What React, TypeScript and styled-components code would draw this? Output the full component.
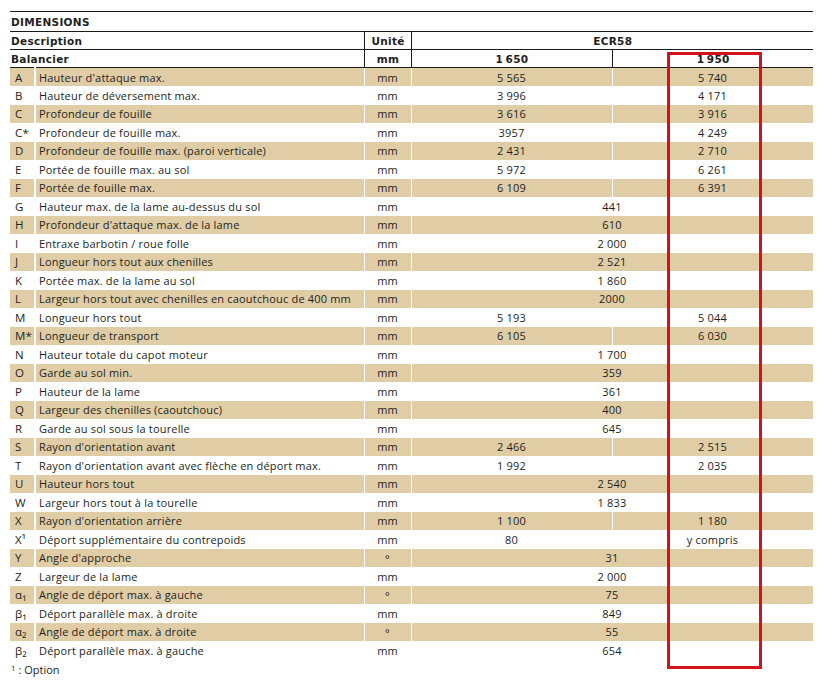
import styled, { createGlobalStyle } from "styled-components";

const GlobalStyle = createGlobalStyle`
  html, body {
    margin: 0;
    padding: 0;
    background: #ffffff;
  }
  body {
    font-family: "Open Sans", "Noto Sans", sans-serif;
    color: #231f20;
  }
`;

type Row = {
  key: string;
  label: string;
  unit: string;
  a: string;
  b?: string;
};

const rows: Row[] = [
  { key: "A", label: "Hauteur d'attaque max.", unit: "mm", a: "5 565", b: "5 740" },
  { key: "B", label: "Hauteur de déversement max.", unit: "mm", a: "3 996", b: "4 171" },
  { key: "C", label: "Profondeur de fouille", unit: "mm", a: "3 616", b: "3 916" },
  { key: "C*", label: "Profondeur de fouille max.", unit: "mm", a: "3957", b: "4 249" },
  { key: "D", label: "Profondeur de fouille max. (paroi verticale)", unit: "mm", a: "2 431", b: "2 710" },
  { key: "E", label: "Portée de fouille max. au sol", unit: "mm", a: "5 972", b: "6 261" },
  { key: "F", label: "Portée de fouille max.", unit: "mm", a: "6 109", b: "6 391" },
  { key: "G", label: "Hauteur max. de la lame au-dessus du sol", unit: "mm", a: "441" },
  { key: "H", label: "Profondeur d'attaque max. de la lame", unit: "mm", a: "610" },
  { key: "I", label: "Entraxe barbotin / roue folle", unit: "mm", a: "2 000" },
  { key: "J", label: "Longueur hors tout aux chenilles", unit: "mm", a: "2 521" },
  { key: "K", label: "Portée max. de la lame au sol", unit: "mm", a: "1 860" },
  { key: "L", label: "Largeur hors tout avec chenilles en caoutchouc de 400 mm", unit: "mm", a: "2000" },
  { key: "M", label: "Longueur hors tout", unit: "mm", a: "5 193", b: "5 044" },
  { key: "M*", label: "Longueur de transport", unit: "mm", a: "6 105", b: "6 030" },
  { key: "N", label: "Hauteur totale du capot moteur", unit: "mm", a: "1 700" },
  { key: "O", label: "Garde au sol min.", unit: "mm", a: "359" },
  { key: "P", label: "Hauteur de la lame", unit: "mm", a: "361" },
  { key: "Q", label: "Largeur des chenilles (caoutchouc)", unit: "mm", a: "400" },
  { key: "R", label: "Garde au sol sous la tourelle", unit: "mm", a: "645" },
  { key: "S", label: "Rayon d'orientation avant", unit: "mm", a: "2 466", b: "2 515" },
  { key: "T", label: "Rayon d'orientation avant avec flèche en déport max.", unit: "mm", a: "1 992", b: "2 035" },
  { key: "U", label: "Hauteur hors tout", unit: "mm", a: "2 540" },
  { key: "W", label: "Largeur hors tout à la tourelle", unit: "mm", a: "1 833" },
  { key: "X", label: "Rayon d'orientation arrière", unit: "mm", a: "1 100", b: "1 180" },
  { key: "X¹", label: "Déport supplémentaire du contrepoids", unit: "mm", a: "80", b: "y compris" },
  { key: "Y", label: "Angle d'approche", unit: "°", a: "31" },
  { key: "Z", label: "Largeur de la lame", unit: "mm", a: "2 000" },
  { key: "α₁", label: "Angle de déport max. à gauche", unit: "°", a: "75" },
  { key: "β₁", label: "Déport parallèle max. à droite", unit: "mm", a: "849" },
  { key: "α₂", label: "Angle de déport max. à droite", unit: "°", a: "55" },
  { key: "β₂", label: "Déport parallèle max. à gauche", unit: "mm", a: "654" },
];

const App = () => (
  <>
    <GlobalStyle />
    <Page>
      <Sheet>
        <Table>
          <colgroup>
            <col style={{ width: 25 }} />
            <col style={{ width: 329 }} />
            <col style={{ width: 47 }} />
            <col style={{ width: 201 }} />
            <col style={{ width: 201 }} />
          </colgroup>
          <thead>
            <TitleRow>
              <TitleCell colSpan={5}>DIMENSIONS</TitleCell>
            </TitleRow>
            <HeadRow>
              <HeadCell colSpan={2}>Description</HeadCell>
              <HeadCell $center $divided>Unité</HeadCell>
              <HeadCell $center $divided colSpan={2}>ECR58</HeadCell>
            </HeadRow>
            <HeadRow>
              <HeadCell colSpan={2}>Balancier</HeadCell>
              <HeadCell $center $divided>mm</HeadCell>
              <HeadCell $center $divided>1{"\u2009"}650</HeadCell>
              <HeadCell $center $divided>1{"\u2009"}950</HeadCell>
            </HeadRow>
          </thead>
          <tbody>
            {rows.map((r, i) => (
              <DataRow key={r.key} $shaded={i % 2 === 0}>
                <LetterCell>{r.key}</LetterCell>
                <DescCell>{r.label}</DescCell>
                <UnitCell $degree={r.unit === "°"}>{r.unit}</UnitCell>
                {r.b === undefined ? (
                  <ValueCell colSpan={2}>{r.a}</ValueCell>
                ) : (
                  <>
                    <ValueCell>{r.a}</ValueCell>
                    <ValueCell>{r.b}</ValueCell>
                  </>
                )}
              </DataRow>
            ))}
          </tbody>
        </Table>
        <Highlight />
        <Footnote>
          <sup>1</sup> : Option
        </Footnote>
      </Sheet>
    </Page>
  </>
);
export default App;

const Page = styled.div`
  padding: 11px 0 0 10px;
`;

const Sheet = styled.div`
  position: relative;
  width: 803px;
`;

const Table = styled.table`
  width: 803px;
  table-layout: fixed;
  border-collapse: collapse;
  font-size: 11px;
  letter-spacing: 0.18px;
`;

const TitleRow = styled.tr`
  height: 20px;
  border-top: 1px solid #1a1a1a;
  border-bottom: 1px solid #1a1a1a;
`;

const TitleCell = styled.th`
  padding: 0 0 0 1px;
  text-align: left;
  font-family: "DejaVu Sans", "Open Sans", sans-serif;
  font-weight: 700;
  font-size: 10.5px;
  letter-spacing: 0.3px;
`;

const HeadRow = styled.tr`
  height: 18px;
  border-bottom: 1px solid #1a1a1a;
`;

const HeadCell = styled.th<{ $center?: boolean; $divided?: boolean }>`
  padding: 0 0 0 1px;
  text-align: ${({ $center }) => ($center ? "center" : "left")};
  font-family: "DejaVu Sans", "Open Sans", sans-serif;
  font-weight: 700;
  font-size: 10.5px;
  letter-spacing: 0.3px;
  ${({ $divided }) => ($divided ? "border-left: 1px solid #1a1a1a;" : "")}
`;

const DataRow = styled.tr<{ $shaded: boolean }>`
  height: 18.5px;
  background-color: ${({ $shaded }) => ($shaded ? "#e0cda6" : "#ffffff")};
`;

const LetterCell = styled.td`
  padding: 0 0 0 5px;
  border-right: 2px solid #ffffff;
  white-space: nowrap;
  font-size: 11.5px;
`;

const DescCell = styled.td`
  padding: 0 0 0 3px;
  white-space: nowrap;
  border-right: 1px solid #ffffff;
`;

const UnitCell = styled.td<{ $degree: boolean }>`
  text-align: center;
  padding: 0;
  border-right: 1px solid #ffffff;
  ${({ $degree }) => ($degree ? "vertical-align: top; padding-top: 2px;" : "")}
`;

const ValueCell = styled.td`
  text-align: center;
  padding: 0;
  border-right: 1px solid #ffffff;
`;

const Highlight = styled.div`
  position: absolute;
  left: 657px;
  top: 41px;
  width: 95px;
  height: 617px;
  border: 3px solid #d3121c;
  box-sizing: border-box;
  pointer-events: none;
`;

const Footnote = styled.div`
  font-size: 11px;
  line-height: 16px;
  padding-left: 1px;

  sup {
    font-size: 8px;
    vertical-align: 3px;
  }
`;
